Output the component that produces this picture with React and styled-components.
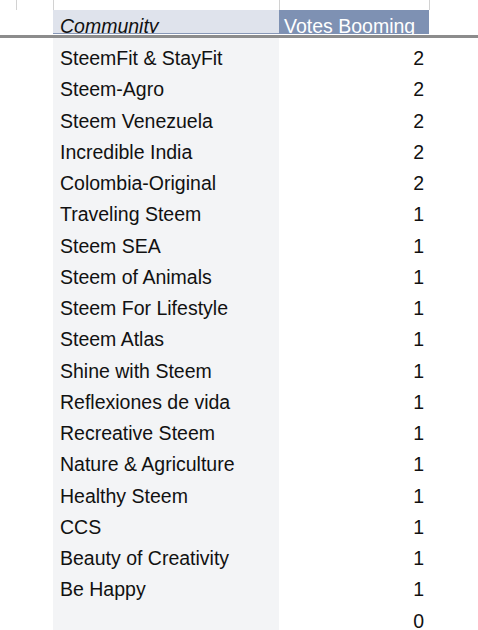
import React from 'react';
import styled, { createGlobalStyle } from 'styled-components';

const Global = createGlobalStyle`
  html, body { margin: 0; padding: 0; background: #fff; }
  body { font-family: "Liberation Sans", Arial, sans-serif; color: #111; }
`;

const rows = [
  ['SteemFit & StayFit', 2],
  ['Steem-Agro', 2],
  ['Steem Venezuela', 2],
  ['Incredible India', 2],
  ['Colombia-Original', 2],
  ['Traveling Steem', 1],
  ['Steem SEA', 1],
  ['Steem of Animals', 1],
  ['Steem For Lifestyle', 1],
  ['Steem Atlas', 1],
  ['Shine with Steem', 1],
  ['Reflexiones de vida', 1],
  ['Recreative Steem', 1],
  ['Nature & Agriculture', 1],
  ['Healthy Steem', 1],
  ['CCS', 1],
  ['Beauty of Creativity', 1],
  ['Be Happy', 1],
  ['', 0],
];

// ─── Styles ───────────────────────────────────────────────────
const Page = styled.div`
  width: 478px;
  height: 630px;
  overflow: hidden;
  display: flex;
  flex-direction: column;
  & > * { flex-shrink: 0; }
`;

const TopStrip = styled.div`
  height: 10px;
  display: grid;
  grid-template-columns: 16px 37px 226px 150px 1fr;
`;

const Tick = styled.div`
  border-left: ${({ $line }) => ($line ? '1px solid #d2d2d2' : 'none')};
`;

const HeaderRow = styled.div`
  height: 24px;
  display: grid;
  grid-template-columns: 53px 226px 150px 1fr;
  font-size: 19.5px;
`;

const HeadCell = styled.div`
  overflow: hidden;
  line-height: 33px;
  height: 24px;
  box-sizing: border-box;
  padding-left: ${({ $right }) => ($right ? '5px' : '7px')};
  background: ${({ $right }) => ($right ? '#7e91b3' : '#dfe3ec')};
  color: ${({ $right }) => ($right ? '#fff' : '#111')};
  font-style: ${({ $right }) => ($right ? 'normal' : 'italic')};
  border-bottom: ${({ $right }) => ($right ? 'none' : '1px solid #8797b6')};
  white-space: nowrap;
`;

const Freeze = styled.div`
  height: 3px;
  background: #8c8c8c;
  margin-top: 1px;
`;

const Body = styled.div`
  flex: 1;
  display: grid;
  grid-template-columns: 53px 226px 150px 1fr;
  grid-auto-rows: 31.25px;
  align-content: start;
  padding-top: 5px;
  font-size: 19.5px;
  line-height: 31.25px;
  background: linear-gradient(to right, transparent 53px, #f3f4f6 53px, #f3f4f6 279px, transparent 279px);
`;

const NameCell = styled.div`
  padding-left: 7px;
  white-space: nowrap;
`;

const NumCell = styled.div`
  text-align: right;
  padding-right: 5px;
`;

// ─── Component ────────────────────────────────────────────────
const App = () => (
  <>
    <Global />
    <Page>
      <TopStrip>
        <Tick />
        <Tick $line />
        <Tick $line />
        <Tick $line />
        <Tick $line />
      </TopStrip>
      <HeaderRow>
        <div />
        <HeadCell>Community</HeadCell>
        <HeadCell $right>Votes Booming</HeadCell>
        <div />
      </HeaderRow>
      <Freeze />
      <Body>
        {rows.map(([name, n], i) => (
          <React.Fragment key={i}>
            <div />
            <NameCell>{name}</NameCell>
            <NumCell>{n}</NumCell>
            <div />
          </React.Fragment>
        ))}
      </Body>
    </Page>
  </>
);

export default App;
